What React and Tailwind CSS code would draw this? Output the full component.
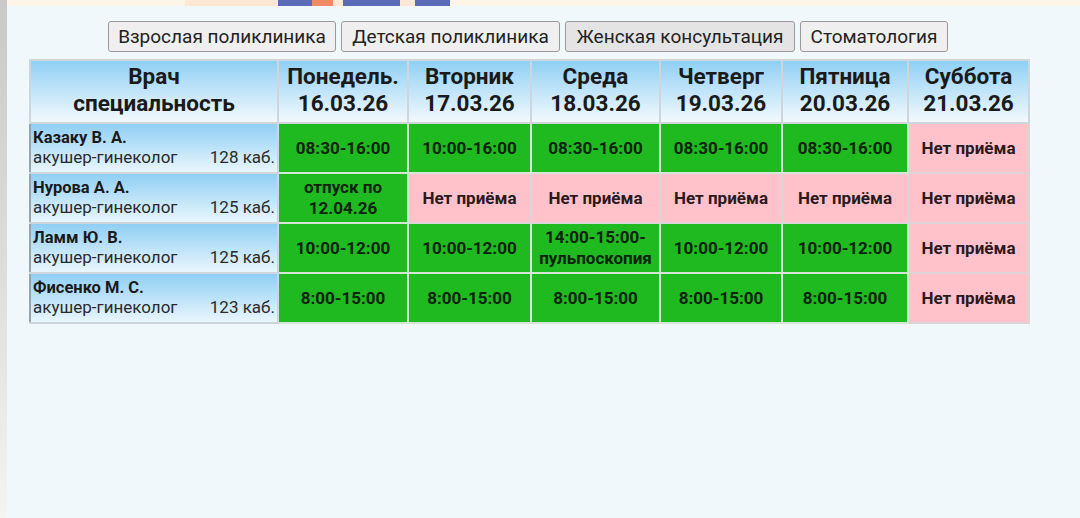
import React from "react";

const days = [
  ["Понедель.", "16.03.26"],
  ["Вторник", "17.03.26"],
  ["Среда", "18.03.26"],
  ["Четверг", "19.03.26"],
  ["Пятница", "20.03.26"],
  ["Суббота", "21.03.26"],
];

const NO = null;
const rows = [
  {
    name: "Казаку В. А.",
    room: "128 каб.",
    cells: [["08:30-16:00"], ["10:00-16:00"], ["08:30-16:00"], ["08:30-16:00"], ["08:30-16:00"], NO],
  },
  {
    name: "Нурова А. А.",
    room: "125 каб.",
    cells: [["отпуск по", "12.04.26"], NO, NO, NO, NO, NO],
  },
  {
    name: "Ламм Ю. В.",
    room: "125 каб.",
    cells: [["10:00-12:00"], ["10:00-12:00"], ["14:00-15:00-", "пульпоскопия"], ["10:00-12:00"], ["10:00-12:00"], NO],
  },
  {
    name: "Фисенко М. С.",
    room: "123 каб.",
    cells: [["8:00-15:00"], ["8:00-15:00"], ["8:00-15:00"], ["8:00-15:00"], ["8:00-15:00"], NO],
  },
];

const tabs = [
  ["Взрослая поликлиника", "w-[228px]", "bg-[#efefef]"],
  ["Детская поликлиника", "w-[219px]", "bg-[#efefef]"],
  ["Женская консультация", "w-[230px]", "bg-[#e4e4e4]"],
  ["Стоматология", "w-[148px]", "bg-[#efefef]"],
];

export default function App() {
  return (
    <div
      className="flex h-[518px] w-[1080px] overflow-hidden bg-[#f1f8fb] text-[#1d1d1d]"
      style={{ fontFamily: "Roboto, 'Noto Sans', sans-serif" }}
    >
      <div className="h-full w-[7px] bg-gradient-to-b from-[#c9c9c9] via-[#dcdcdc] to-[#f4f4f4]" />
      <div className="flex flex-1 flex-col">
        <div className="flex h-[6px] bg-[#fdf6e8]">
          <div className="ml-[178px] h-full w-[93px] bg-[#fde9d3]" />
          <div className="h-full w-[34px] bg-[#5a6bb8]" />
          <div className="h-full w-[21px] bg-[#f08a64]" />
          <div className="h-full w-[10px] bg-[#fde9d3]" />
          <div className="h-full w-[57px] bg-[#5a6bb8]" />
          <div className="h-full w-[15px] bg-[#fde9d3]" />
          <div className="h-full w-[35px] bg-[#5a6bb8]" />
        </div>
        <div className="mt-[15px] flex gap-[5px] pl-[101px]">
          {tabs.map(([t, w, bg]) => (
            <button
              key={t}
              className={`${w} ${bg} h-[31px] rounded-[3px] border border-[#9a9a9a] pb-[1px] text-[19px] leading-none text-[#222]`}
            >
              {t}
            </button>
          ))}
        </div>
        <div className="mt-[7px] pl-[22px]">
          <table className="w-[999px] table-fixed border-collapse">
            <colgroup>
              <col className="w-[248px]" />
              <col className="w-[130px]" />
              <col className="w-[123px]" />
              <col className="w-[129px]" />
              <col className="w-[122px]" />
              <col className="w-[126px]" />
              <col className="w-[121px]" />
            </colgroup>
            <thead>
              <tr className="h-[63px]">
                <th className="border-2 border-[#cfd6db] bg-gradient-to-b from-[#8fd0f4] to-[#f2f9fd] pb-[4px] text-center text-[22.5px] font-bold leading-[27px] text-[#1a1a1a]">
                  Врач
                  <br />
                  специальность
                </th>
                {days.map(([d, dt]) => (
                  <th
                    key={d}
                    className="border-2 border-[#cfd6db] bg-gradient-to-b from-[#8fd0f4] to-[#f2f9fd] pb-[4px] text-center text-[22.5px] font-bold leading-[27px] text-[#1a1a1a]"
                  >
                    {d}
                    <br />
                    {dt}
                  </th>
                ))}
              </tr>
            </thead>
            <tbody>
              {rows.map((r) => (
                <tr key={r.name} className="h-[50px]">
                  <td className="border-2 border-[#cfd6db] border-l-[#9aa3a8] bg-gradient-to-b from-[#8fcff3] to-[#e9f6fd] px-[2px] align-top">
                    <div className="pt-[4px] text-[16.5px] font-bold leading-[19px] text-[#1a1a1a]">{r.name}</div>
                    <div className="flex justify-between text-[17px] leading-[20px] text-[#2a2a2a]">
                      <span>акушер-гинеколог</span>
                      <span>{r.room}</span>
                    </div>
                  </td>
                  {r.cells.map((c, i) =>
                    c ? (
                      <td
                        key={i}
                        className="border-2 border-[#d6e6d6] bg-[#1fba1f] text-center text-[17px] font-bold leading-[21px] text-[#0c220c]"
                      >
                        {c.map((l, j) => (
                          <div key={j}>{l}</div>
                        ))}
                      </td>
                    ) : (
                      <td
                        key={i}
                        className="border-2 border-[#dcd4d6] bg-[#ffc2cb] text-center text-[17px] font-bold leading-[21px] text-[#2a1a1e]"
                      >
                        Нет приёма
                      </td>
                    )
                  )}
                </tr>
              ))}
            </tbody>
          </table>
        </div>
      </div>
    </div>
  );
}
